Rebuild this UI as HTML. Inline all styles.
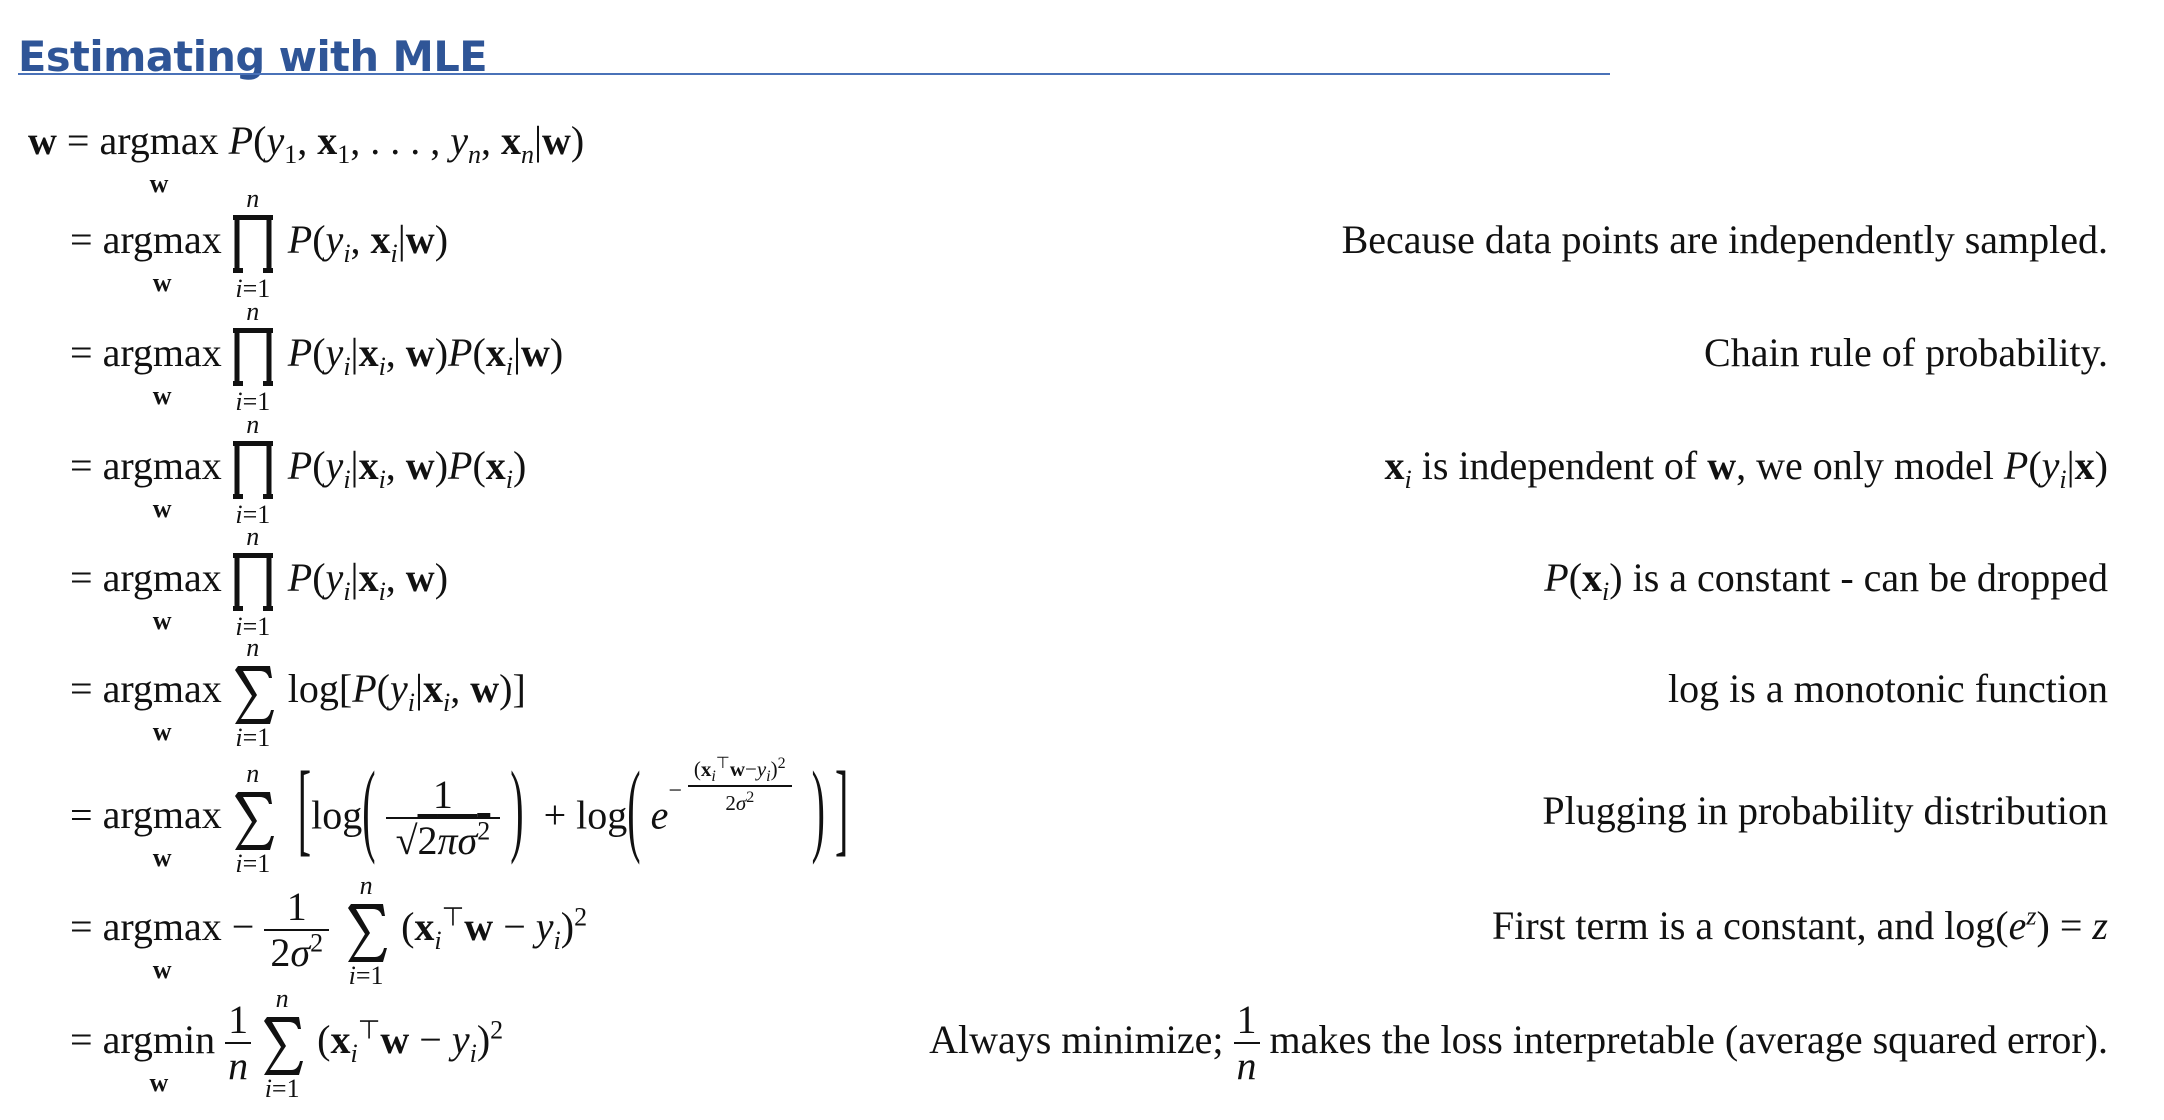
<!DOCTYPE html>
<html><head><meta charset="utf-8"><style>
body{margin:0;width:2164px;height:1120px;background:#fff;overflow:hidden;position:relative;font-family:"Liberation Serif",serif;color:#111}
h1{position:absolute;left:18px;top:33px;margin:0;font:bold 41.5px "DejaVu Sans","Liberation Sans",sans-serif;color:#2f5597;letter-spacing:-0.5px;line-height:48px}
.ul{position:absolute;left:18px;top:73px;width:1592px;height:2px;background:#4a72b8}
.row{position:absolute;left:0;height:40px;line-height:40px;font-size:40px;white-space:nowrap}
.r{position:absolute;right:56px;height:40px;line-height:40px;font-size:40px;white-space:nowrap}
i{font-style:italic}
b{font-weight:bold}
sub,sup{font-size:26px;line-height:0}
.am{position:relative;display:inline-block}
.am .w{position:absolute;left:0;right:0;top:50px;text-align:center;font-size:26px;font-weight:bold;line-height:26px}
.op{position:relative;display:inline-block;width:46px;height:1px;margin:0 12px 0 8px}
.op svg{position:absolute;left:2px;top:-37px}
.op .n{position:absolute;left:0;right:0;top:-66px;font-size:26px;font-style:italic;line-height:26px;text-align:center}
.op .l{position:absolute;left:-10px;right:-10px;top:24px;font-size:26px;line-height:26px;text-align:center}
.fr{display:inline-block;vertical-align:-26px;text-align:center;line-height:44px}
.fr>span{display:block;padding:0 3px}
.fr>span:first-child{border-bottom:2px solid #111}
.big{display:inline-block;transform:scaleY(2.6);transform-origin:50% 60%}
</style></head><body>
<h1>Estimating with MLE</h1>
<div class="ul"></div>

<div class="row" style="top:121px;left:28px"><b>w</b> = <span class="am">argmax<span class="w">w</span></span> <i>P</i>(<i>y</i><sub>1</sub>, <b>x</b><sub>1</sub>, . . . , <i>y<sub>n</sub></i>, <b>x</b><sub><i>n</i></sub>|<b>w</b>)</div>

<div class="row" style="top:220px;left:70px">= <span class="am">argmax<span class="w">w</span></span><span class="op"><span class="n">n</span><svg width="42" height="58" viewBox="0 0 42 58"><path d="M1 2.5H41M5 2V56M37 2V56M1 55.5H11M31 55.5H41" stroke="#111" stroke-width="5" fill="none"/></svg><span class="l"><i>i</i>=1</span></span><i>P</i>(<i>y<sub>i</sub></i>, <b>x</b><sub><i>i</i></sub>|<b>w</b>)</div>
<div class="r" style="top:220px">Because data points are independently sampled.</div>

<div class="row" style="top:333px;left:70px">= <span class="am">argmax<span class="w">w</span></span><span class="op"><span class="n">n</span><svg width="42" height="58" viewBox="0 0 42 58"><path d="M1 2.5H41M5 2V56M37 2V56M1 55.5H11M31 55.5H41" stroke="#111" stroke-width="5" fill="none"/></svg><span class="l"><i>i</i>=1</span></span><i>P</i>(<i>y<sub>i</sub></i>|<b>x</b><sub><i>i</i></sub>, <b>w</b>)<i>P</i>(<b>x</b><sub><i>i</i></sub>|<b>w</b>)</div>
<div class="r" style="top:333px">Chain rule of probability.</div>

<div class="row" style="top:446px;left:70px">= <span class="am">argmax<span class="w">w</span></span><span class="op"><span class="n">n</span><svg width="42" height="58" viewBox="0 0 42 58"><path d="M1 2.5H41M5 2V56M37 2V56M1 55.5H11M31 55.5H41" stroke="#111" stroke-width="5" fill="none"/></svg><span class="l"><i>i</i>=1</span></span><i>P</i>(<i>y<sub>i</sub></i>|<b>x</b><sub><i>i</i></sub>, <b>w</b>)<i>P</i>(<b>x</b><sub><i>i</i></sub>)</div>
<div class="r" style="top:446px"><b>x</b><sub><i>i</i></sub> is independent of <b>w</b>, we only model <i>P</i>(<i>y<sub>i</sub></i>|<b>x</b>)</div>

<div class="row" style="top:558px;left:70px">= <span class="am">argmax<span class="w">w</span></span><span class="op"><span class="n">n</span><svg width="42" height="58" viewBox="0 0 42 58"><path d="M1 2.5H41M5 2V56M37 2V56M1 55.5H11M31 55.5H41" stroke="#111" stroke-width="5" fill="none"/></svg><span class="l"><i>i</i>=1</span></span><i>P</i>(<i>y<sub>i</sub></i>|<b>x</b><sub><i>i</i></sub>, <b>w</b>)</div>
<div class="r" style="top:558px"><i>P</i>(<b>x</b><sub><i>i</i></sub>) is a constant - can be dropped</div>

<div class="row" style="top:669px;left:70px">= <span class="am">argmax<span class="w">w</span></span><span class="op"><span class="n">n</span><svg width="42" height="62" viewBox="0 0 42 62"><path d="M3 6L6 2H38L40 14L37 14Q35 7 28 7H11L25 31L9 55H30Q37 55 39 46L42 46L38 60H3L20 32Z" fill="#111"/></svg><span class="l"><i>i</i>=1</span></span>log[<i>P</i>(<i>y<sub>i</sub></i>|<b>x</b><sub><i>i</i></sub>, <b>w</b>)]</div>
<div class="r" style="top:669px">log is a monotonic function</div>

<div class="row" style="top:769px;left:70px">= <span class="am">argmax<span class="w">w</span></span><span class="op"><span class="n">n</span><svg width="42" height="62" viewBox="0 0 42 62"><path d="M3 6L6 2H38L40 14L37 14Q35 7 28 7H11L25 31L9 55H30Q37 55 39 46L42 46L38 60H3L20 32Z" fill="#111"/></svg><span class="l"><i>i</i>=1</span></span> <span class="big">[</span>log<span class="big">(</span>&nbsp;<span class="fr"><span style="padding:0 10px">1</span><span style="padding:0 10px">√<span style="text-decoration:overline">2<i>πσ</i><sup>2</sup></span></span></span>&nbsp;<span class="big">)</span> &nbsp;+ log<span class="big">(</span>&nbsp;<i>e</i><sup style="position:relative;top:-16px;font-size:24px">− <span class="fr" style="line-height:32px;vertical-align:-12px;font-size:21px"><span style="padding:0 6px">(<b>x</b><sub style="font-size:16px"><i>i</i></sub><sup style="font-size:16px">⊤</sup><b>w</b>−<i>y<sub style="font-size:16px">i</sub></i>)<sup style="font-size:16px">2</sup></span><span>2<i>σ</i><sup style="font-size:16px">2</sup></span></span></sup>&nbsp;&nbsp;<span class="big">)</span>&nbsp;<span class="big">]</span></div>
<div class="r" style="top:791px">Plugging in probability distribution</div>

<div class="row" style="top:885px;left:70px">= <span class="am">argmax<span class="w">w</span></span> − <span class="fr"><span style="padding:0 6px">1</span><span style="padding:0 6px">2<i>σ</i><sup>2</sup></span></span><span class="op" style="margin-left:14px"><span class="n">n</span><svg width="42" height="62" viewBox="0 0 42 62"><path d="M3 6L6 2H38L40 14L37 14Q35 7 28 7H11L25 31L9 55H30Q37 55 39 46L42 46L38 60H3L20 32Z" fill="#111"/></svg><span class="l"><i>i</i>=1</span></span>(<b>x</b><sub><i>i</i></sub><sup>⊤</sup><b>w</b> − <i>y<sub>i</sub></i>)<sup>2</sup></div>
<div class="r" style="top:906px">First term is a constant, and log(<i>e<sup>z</sup></i>) = <i>z</i></div>

<div class="row" style="top:998px;left:70px">= <span class="am">argmin<span class="w">w</span></span> <span class="fr"><span>1</span><span><i>n</i></span></span><span class="op"><span class="n">n</span><svg width="42" height="62" viewBox="0 0 42 62"><path d="M3 6L6 2H38L40 14L37 14Q35 7 28 7H11L25 31L9 55H30Q37 55 39 46L42 46L38 60H3L20 32Z" fill="#111"/></svg><span class="l"><i>i</i>=1</span></span>(<b>x</b><sub><i>i</i></sub><sup>⊤</sup><b>w</b> − <i>y<sub>i</sub></i>)<sup>2</sup></div>
<div class="r" style="top:998px">Always minimize; <span class="fr"><span>1</span><span><i>n</i></span></span> makes the loss interpretable (average squared error).</div>
</body></html>
